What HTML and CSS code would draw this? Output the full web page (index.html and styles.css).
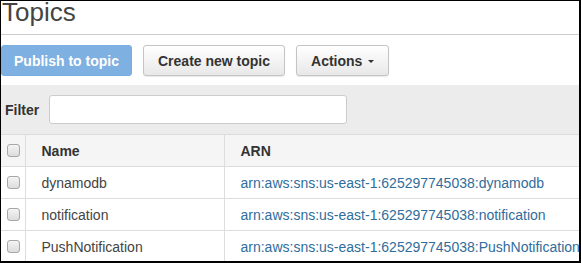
FILE: index.html
```html
<!DOCTYPE html>
<html lang="en">
<head>
    <meta charset="UTF-8">
    <title>Topics</title>
    <link rel="stylesheet" href="styles.css">
</head>
<body>
    <div class="frame">
        <h1 class="page-title">Topics</h1>

        <!-- Toolbar -->
        <div class="toolbar">
            <button class="btn btn-primary">Publish to topic</button>
            <button class="btn">Create new topic</button>
            <button class="btn">Actions <span class="caret"></span></button>
        </div>

        <!-- Filter -->
        <div class="filter-bar">
            <label for="filter">Filter</label>
            <input type="text" id="filter">
        </div>

        <!-- Topics table -->
        <table class="topics">
            <colgroup>
                <col class="col-check">
                <col class="col-name">
                <col>
            </colgroup>
            <thead>
                <tr>
                    <th><span class="check"></span></th>
                    <th>Name</th>
                    <th>ARN</th>
                </tr>
            </thead>
            <tbody>
                <tr>
                    <td><span class="check"></span></td>
                    <td>dynamodb</td>
                    <td><a href="#">arn:aws:sns:us-east-1:625297745038:dynamodb</a></td>
                </tr>
                <tr>
                    <td><span class="check"></span></td>
                    <td>notification</td>
                    <td><a href="#">arn:aws:sns:us-east-1:625297745038:notification</a></td>
                </tr>
                <tr>
                    <td><span class="check"></span></td>
                    <td>PushNotification</td>
                    <td><a href="#">arn:aws:sns:us-east-1:625297745038:PushNotification</a></td>
                </tr>
            </tbody>
        </table>
    </div>
</body>
</html>
```

FILE: styles.css
```css
body {
    margin: 0;
    font-family: 'Liberation Sans', Arial, sans-serif;
    color: #444;
    background: #fff;
}

.frame {
    width: 581px;
    height: 263px;
    box-sizing: border-box;
    border-top: 1px solid #000;
    border-left: 1px solid #000;
    border-right: 2px solid #000;
    border-bottom: 2px solid #000;
    overflow: hidden;
}

.page-title {
    margin: 0;
    height: 33px;
    font-size: 26px;
    font-weight: normal;
    line-height: 23px;
    padding-left: 1px;
    color: #444;
    border-bottom: 1px solid #ccc;
    box-sizing: content-box;
}

.toolbar {
    display: flex;
    gap: 11px;
    padding: 10px 0 9px;
}

.btn {
    height: 31px;
    padding: 0 14px;
    font-family: inherit;
    font-size: 14px;
    font-weight: bold;
    color: #333;
    white-space: nowrap;
    border: 1px solid #c4c4c4;
    border-radius: 3px;
    background: linear-gradient(to bottom, #ffffff 0%, #e8e8e8 100%);
    box-shadow: 0 1px 1px rgba(0, 0, 0, 0.08);
}

.btn-primary {
    width: 131px;
    padding: 0;
    color: #fff;
    border-color: #7aaee0;
    background: #7eb0e1;
    box-shadow: none;
}

.caret {
    display: inline-block;
    width: 0;
    height: 0;
    margin-left: 2px;
    vertical-align: middle;
    border-top: 3px solid #333;
    border-left: 3px solid transparent;
    border-right: 3px solid transparent;
}

.filter-bar {
    display: flex;
    align-items: center;
    gap: 10px;
    height: 49px;
    padding-left: 4px;
    background: #ececec;
    border-bottom: 1px solid #dcdcdc;
}

.filter-bar label {
    font-size: 14px;
    font-weight: bold;
    color: #333;
}

.filter-bar input {
    width: 298px;
    height: 29px;
    box-sizing: border-box;
    border: 1px solid #ccc;
    border-radius: 3px;
    background: #fff;
}

.topics {
    width: 100%;
    table-layout: fixed;
    border-collapse: collapse;
    font-size: 14px;
}

.col-check {
    width: 24px;
}

.col-name {
    width: 199px;
}

.topics th,
.topics td {
    height: 31px;
    padding: 0 0 0 16px;
    text-align: left;
    white-space: nowrap;
    border-bottom: 1px solid #ddd;
    border-left: 1px solid #ddd;
}

.topics th:first-child,
.topics td:first-child {
    border-left: none;
    padding: 0 0 0 6px;
}

.topics th {
    background: #f5f5f5;
    color: #333;
    font-weight: bold;
}

.topics td {
    color: #444;
}

.topics a {
    color: #2f6d9c;
    text-decoration: none;
}

.check {
    display: block;
    width: 11px;
    height: 11px;
    border: 1px solid #a8a8a8;
    border-radius: 3px;
    background: linear-gradient(to bottom, #f4f4f4, #dcdcdc);
}
```
